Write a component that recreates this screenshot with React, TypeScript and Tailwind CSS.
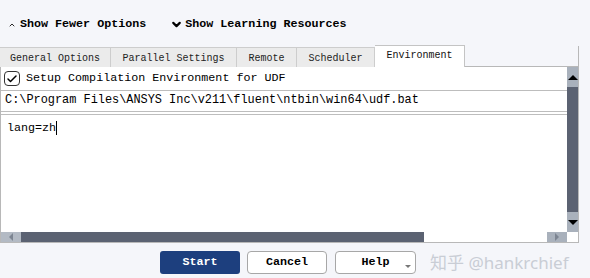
import React from 'react';
import { ChevronDown, ChevronUp, Check } from 'lucide-react';

const tabs = [
  { name: 'General Options', w: 'w-[111px]' },
  { name: 'Parallel Settings', w: 'w-[126px]' },
  { name: 'Remote', w: 'w-[60px]' },
  { name: 'Scheduler', w: 'w-[78px]' },
];

const App: React.FC = () => {
  return (
    <div className="w-[590px] h-[278px] overflow-hidden bg-[#f5f6fa] text-black font-['Liberation_Mono',monospace]">
      {/* Toggles */}
      <div className="h-[46px] flex items-center pl-[8px] pt-[4px] text-[11.7px] font-bold">
        <div className="flex items-center">
          <ChevronUp className="w-[8px] h-[8px] mr-[4px]" strokeWidth={2.5} />
          <span>Show Fewer Options</span>
        </div>
        <div className="flex items-center ml-[24px]">
          <ChevronDown className="w-[13px] h-[13px] mr-[2px]" strokeWidth={4} />
          <span>Show Learning Resources</span>
        </div>
      </div>

      {/* Tabs */}
      <div className="flex items-end h-[21px] w-[579px] text-[10px]">
        {tabs.map((tab) => (
          <div
            key={tab.name}
            className={`${tab.w} h-[20px] flex items-center justify-center pt-[1px] bg-[#ebebeb] border-r border-t border-[#cdcdcd] text-[#222]`}
          >
            {tab.name}
          </div>
        ))}
        <div className="w-[90px] h-[22px] flex items-center justify-center bg-white border-t border-r border-[#c4c4c4] text-[#111] pb-[2px]">
          Environment
        </div>
        <div className="flex-1 h-full border-b border-r border-[#b8b8b8]" />
      </div>

      {/* Panel */}
      <div className="w-[579px] h-[176px] bg-white border-l border-r border-b border-[#b8b8b8] grid grid-cols-[1fr_11px] grid-rows-[1fr_10px]">
        <div className="flex flex-col min-w-0">
          <div className="h-[23px] flex items-center pl-[3px] text-[11.7px]">
            <div className="w-[16px] h-[15px] border border-[#333] rounded-[4px] flex items-center justify-center">
              <Check className="w-[12px] h-[12px]" strokeWidth={3} />
            </div>
            <span className="ml-[6px]">Setup Compilation Environment for UDF</span>
          </div>
          <div className="h-[22px] flex items-center pl-[4px] border-t border-b border-[#bdbdbd] text-[11.9px] whitespace-nowrap">
            C:\Program Files\ANSYS Inc\v211\fluent\ntbin\win64\udf.bat
          </div>
          <div className="flex-1 mt-[2px] border-t border-[#bdbdbd] pl-[6px] pt-[5px] text-[11.7px]">
            <span>lang=zh</span>
            <span className="inline-block w-px h-[14px] bg-black align-middle" />
          </div>
        </div>

        {/* Vertical scrollbar */}
        <div className="flex flex-col">
          <div className="h-[20px] bg-[#a9b1bc] flex items-center justify-center">
            <div className="w-0 h-0 border-l-[5px] border-r-[5px] border-b-[5px] border-l-transparent border-r-transparent border-b-black" />
          </div>
          <div className="flex-1 bg-[#5b6272]" />
          <div className="h-[20px] bg-[#a9b1bc] flex items-center justify-center">
            <div className="w-0 h-0 border-l-[5px] border-r-[5px] border-t-[5px] border-l-transparent border-r-transparent border-t-black" />
          </div>
        </div>

        {/* Horizontal scrollbar */}
        <div className="flex h-[10px]">
          <div className="w-[20px] bg-[#b3bac4] flex items-center justify-center">
            <div className="w-0 h-0 border-t-[4px] border-b-[4px] border-r-[4px] border-t-transparent border-b-transparent border-r-[#7d8592]" />
          </div>
          <div className="w-[403px] bg-[#5b6272]" />
          <div className="flex-1 bg-white" />
          <div className="w-[20px] bg-[#a9b1bc] flex items-center justify-center">
            <div className="w-0 h-0 border-t-[4px] border-b-[4px] border-l-[4px] border-t-transparent border-b-transparent border-l-[#7d8592]" />
          </div>
        </div>
        <div className="bg-white" />
      </div>

      {/* Buttons */}
      <div className="flex items-start pt-[8px] h-[34px] pl-[160px] text-[11.7px] font-bold">
        <div className="w-[80px] h-[23px] rounded-[3px] bg-[#1d3f7e] text-white flex items-center justify-center">
          Start
        </div>
        <div className="w-[80px] h-[23px] ml-[7px] rounded-[4px] bg-white border border-[#a7a7a7] flex items-center justify-center">
          Cancel
        </div>
        <div className="relative w-[81px] h-[23px] ml-[8px] rounded-[4px] bg-white border border-[#a7a7a7] flex items-center justify-center">
          Help
          <div className="absolute right-[4px] bottom-[5px] w-0 h-0 border-l-[3px] border-r-[3px] border-t-[3px] border-l-transparent border-r-transparent border-t-[#777]" />
        </div>
        <div className="ml-[14px] mt-[3px] text-[17px] font-normal text-[#c9cdd5] font-['Noto_Sans','Noto_Sans_CJK_SC',sans-serif] leading-none whitespace-nowrap">
          知乎 @hankrchief
        </div>
      </div>
    </div>
  );
};

export default App;
